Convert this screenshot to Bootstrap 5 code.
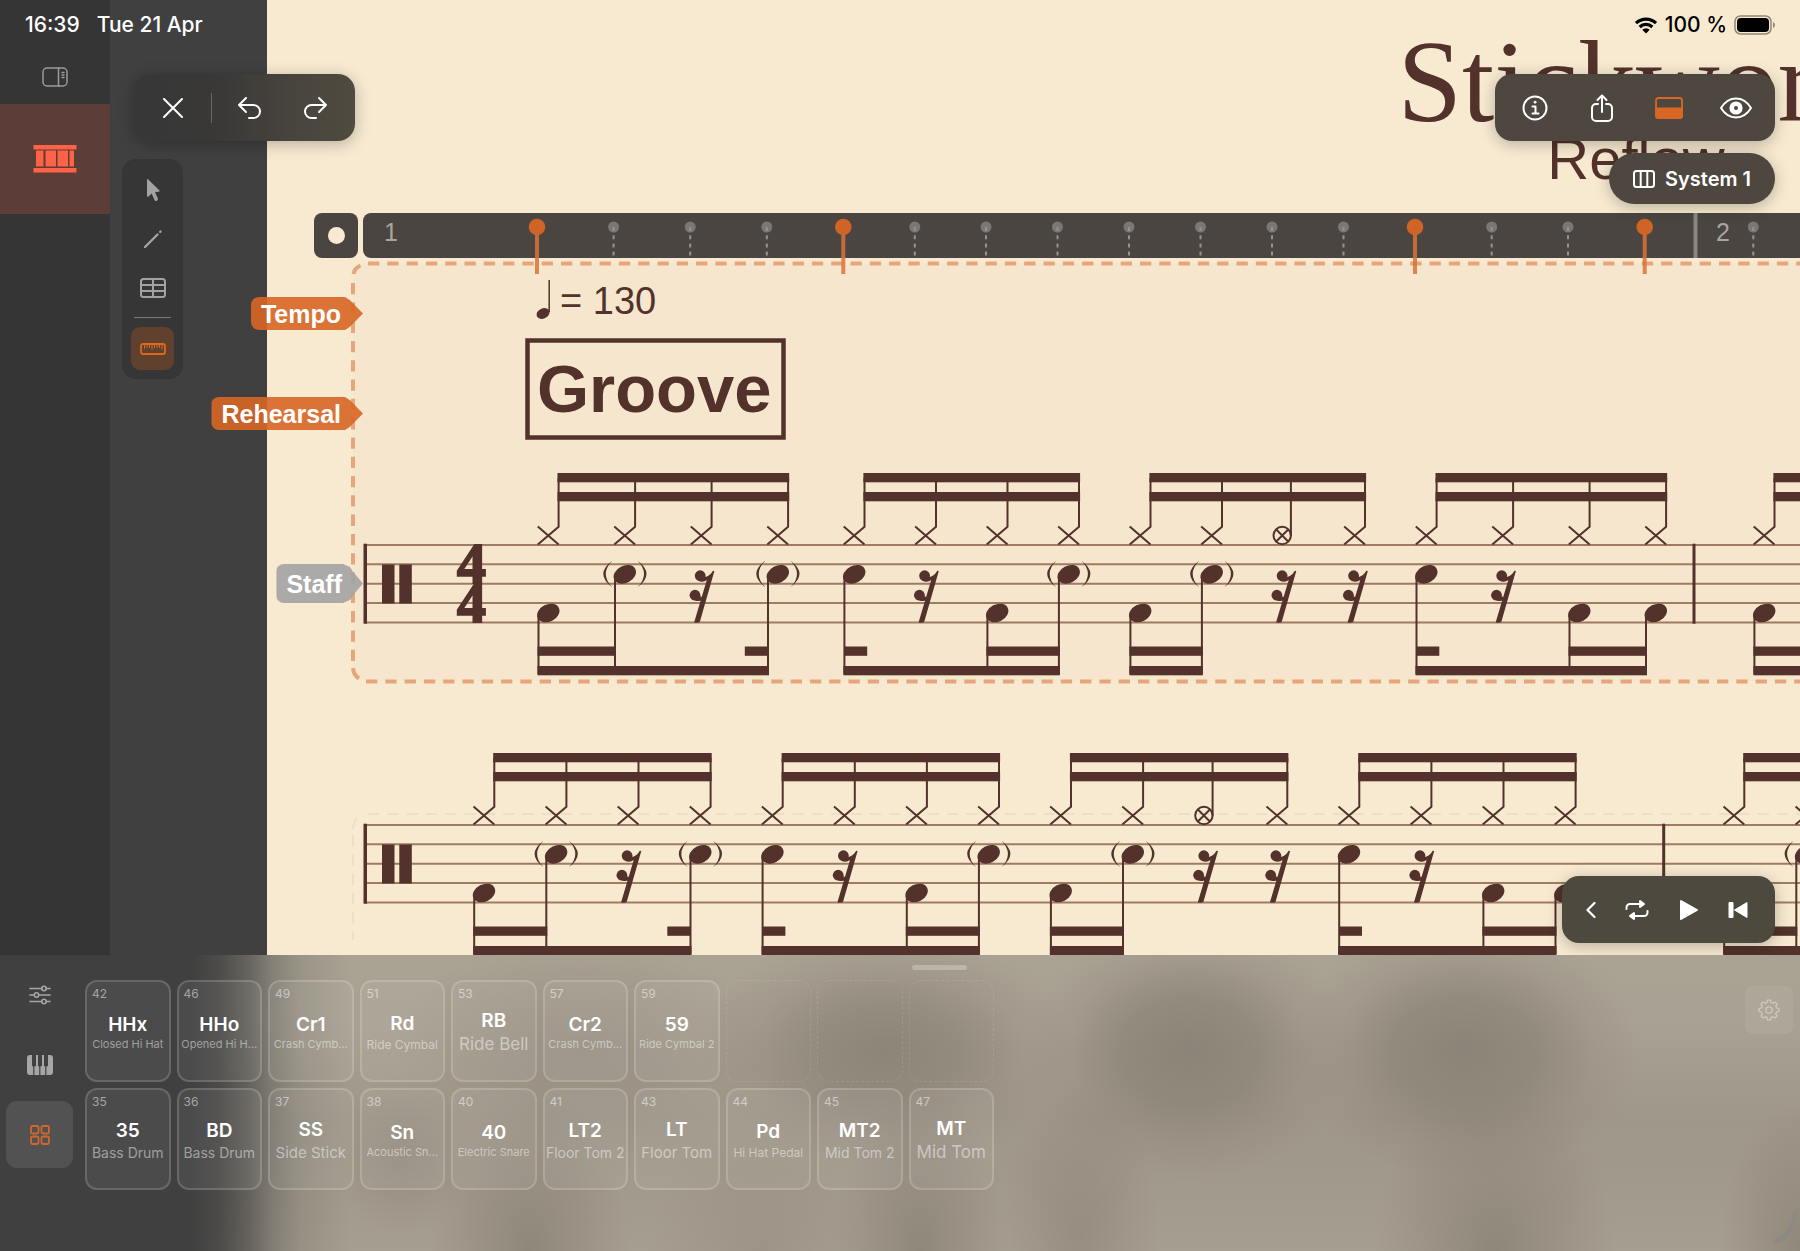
<!DOCTYPE html>
<html lang="en">
<head>
<meta charset="utf-8">
<meta name="viewport" content="width=device-width, initial-scale=1">
<title>Stickwork – Reflow</title>
<link href="https://cdn.jsdelivr.net/npm/bootstrap@5.3.0/dist/css/bootstrap.min.css" rel="stylesheet">
<style>
:root { --ink:#52322b; --paper:#f8ead1; --accent:#d86625; --chip:#4d473f; }
body { font-family:Inter,"Liberation Sans",sans-serif; background:#404040; }
button { background:none; border:0; padding:0; color:inherit; line-height:1; }
svg { display:block; }
svg text { font-family:"Liberation Sans",sans-serif; }
.ico { fill:none; stroke:currentColor; stroke-width:2; stroke-linecap:round; stroke-linejoin:round; }

.clock-bar { height:50px; padding:0 24px 0 25px; font-size:21px; font-weight:500; z-index:6; pointer-events:none; }
.track-rail { width:110px; background:#353535; padding-top:44px; flex:none; }
.track-rail .rail-toggle { height:60px; padding-top:6px; color:#9b9b9b; }
.track-rail .track { height:110px; background:#5c3d37; color:#ff6347; }
.gutter { width:157px; flex:none; background:#404040; }

.sheet { background:var(--paper); min-width:0; }
.sheet-canvas { width:2738px; color:var(--ink); }
.sheet-head { height:213px; padding-top:15px; }
.sheet-title { font:400 116px/134px "Liberation Serif",serif; margin:0; }
.sheet-sub { font:400 58px/64px "Liberation Sans",sans-serif; margin:-22px 0 0; }
.ruler-row { padding-left:47px; gap:5px; z-index:1; }
.loop-key { width:44px; height:45px; border-radius:8px; background:#4a4540; }
.loop-key span { display:block; width:17px; height:17px; border-radius:50%; background:var(--paper); }
.ruler-row svg, .system { overflow:visible; }
.staffline { stroke:#9f7b61; stroke-width:2; }
.glyph { fill:var(--ink); }
.stroke { stroke:var(--ink); fill:none; stroke-width:2; }
.meter { font-family:"Liberation Serif",serif; font-size:58px; font-weight:700; fill:var(--ink); stroke:var(--ink); stroke-width:2; }

.lane-tags { top:297px; left:0; width:363px; z-index:3; font:700 25px/33px "Liberation Sans",sans-serif; color:#fff; }
.lane { background:rgba(216,102,37,.9); padding:0 22px 0 10px; height:33px; border-radius:8px 0 0 8px; line-height:34px;
  clip-path:polygon(0 0,calc(100% - 18px) 0,calc(100% - 13px) 10%,100% 50%,calc(100% - 13px) 90%,calc(100% - 18px) 100%,0 100%); }
.lane-rehearsal { margin-top:67px; }
.lane-staff { margin-top:134px; height:39px; line-height:41px; background:rgba(163,163,163,.9); padding-right:21px;
  clip-path:polygon(0 0,calc(100% - 20px) 0,calc(100% - 13px) 8%,calc(100% - 10px) 20%,100% 50%,calc(100% - 10px) 80%,calc(100% - 13px) 92%,calc(100% - 20px) 100%,0 100%); }

.float-bar { background:var(--chip); border-radius:17px; height:67px; color:#fff; box-shadow:0 3px 16px rgba(0,0,0,.26); z-index:5; }
.edit-bar { left:134px; top:74px; width:221px; background:linear-gradient(90deg,#373737 0%,#393837 35%,#48443e 72%,#504a3f 100%); }
.edit-bar button { width:67px; height:67px; }
.bar-sep { width:1px; height:30px; background:#6a6866; }
.view-bar { right:25px; top:74px; width:280px; padding:0 6px; }
.view-bar button { width:67px; height:67px; }
.system-pill { right:25px; top:153px; width:166px; height:51px; border-radius:26px; font-size:20px; font-weight:600; gap:10px; }
.transport { right:25px; bottom:12px; width:213px; padding:0 27px 0 24px; background:#4d493f; }
.tool-strip { left:122px; top:159px; width:61px; height:220px; padding-top:9px; border-radius:14px; background:#363636; color:#a3a3a3; z-index:4; }
.tool-strip button { width:43px; height:43px; margin-bottom:6px; border-radius:9px; }
.tool-strip hr { width:37px; margin:2px 0 9px; border-color:#8a8a8a; opacity:.8; }
.tool-strip .on { background:#5f412e; color:#e0671f; }

.pad-panel { height:296px; padding:24px 7px 0 6px; flex:none; color:#fff;
  background:
   radial-gradient(ellipse 190px 120px at 885px 95px,rgba(137,128,117,.85),rgba(137,128,117,.6) 40%,rgba(137,128,117,.2) 72%,transparent),
   radial-gradient(ellipse 165px 130px at 1190px 95px,rgba(137,128,117,.9),rgba(137,128,117,.65) 42%,rgba(137,128,117,.2) 74%,transparent),
   radial-gradient(ellipse 175px 130px at 1465px 95px,rgba(137,128,117,.9),rgba(137,128,117,.65) 42%,rgba(137,128,117,.2) 74%,transparent),
   radial-gradient(ellipse 190px 110px at 580px 95px,rgba(143,134,123,.55),rgba(143,134,123,.35) 45%,transparent),
   radial-gradient(ellipse 70px 80px at 402px 200px,rgba(140,131,120,.5),rgba(140,131,120,.3) 45%,transparent),
   radial-gradient(ellipse 100px 170px at 530px 300px,rgba(136,127,116,.75),rgba(136,127,116,.4) 45%,transparent),
   radial-gradient(ellipse 110px 140px at 760px 300px,rgba(143,134,123,.4),rgba(143,134,123,.2) 50%,transparent),
   radial-gradient(ellipse 90px 170px at 920px 300px,rgba(136,127,116,.75),rgba(136,127,116,.4) 45%,transparent),
   radial-gradient(ellipse 80px 150px at 1080px 280px,rgba(136,127,116,.5),rgba(136,127,116,.25) 50%,transparent),
   radial-gradient(ellipse 120px 180px at 1495px 300px,rgba(136,127,116,.75),rgba(136,127,116,.4) 45%,transparent),
   radial-gradient(ellipse 80px 140px at 1800px 290px,rgba(136,127,116,.7),transparent),
   linear-gradient(180deg,#aaa394 0,#a8a092 25%,#9f9789 55%,#a0988a 70%,#a69e90 100%);
  }
.pad-panel::before { content:""; position:absolute; inset:0; background:linear-gradient(90deg,#404040 190px,rgba(64,64,64,.88) 220px,rgba(64,64,64,.62) 250px,rgba(64,64,64,.35) 272px,rgba(64,64,64,.15) 300px,rgba(64,64,64,0) 350px); }
.mode-list { width:67px; color:#a6a6a6; margin-top:-18px; }
.mode-list button { width:67px; height:67px; border-radius:11px; margin-bottom:3px; }
.mode-list .on { background:#525252; color:#d0682c; }
.pads { display:grid; grid-template-columns:repeat(10,1fr); gap:6px; width:909px; margin-left:12px; padding-top:1px; }
.pad { height:102px; border-radius:12px; border:2px solid rgba(255,255,255,.16); background:rgba(255,255,255,.06); color:#fff; position:relative; min-width:0; white-space:nowrap; }
.pad-empty { border:1px dashed rgba(255,255,255,.1); height:102px; border-radius:12px; }
.pad-no { position:absolute; left:5px; top:5px; font-size:12px; line-height:14px; color:rgba(255,255,255,.5); }
.pad-name { font-size:19px; line-height:23px; font-weight:600; }
.pad-label { color:rgba(255,255,255,.48); line-height:17px; font-size:14px; margin:2px 0 -2px; }
.s11 { font-size:11px; line-height:13px; } .s12 { font-size:12px; line-height:15px; }
.s15 { font-size:15px; line-height:19px; } .s17 { font-size:17px; line-height:21px; }
.grabber { top:10px; left:50%; margin-left:12px; width:55px; height:5px; border-radius:3px; background:rgba(255,255,255,.25); }
.gear { width:48px; height:48px; margin-top:7px; border-radius:8px; background:rgba(255,255,255,.07); color:#d0c9bd; }
.corner-hint { right:3px; bottom:6px; }
</style>
<script src="https://cdn.jsdelivr.net/npm/bootstrap@5.3.0/dist/js/bootstrap.bundle.min.js"></script>
</head>
<body class="vh-100 d-flex flex-column overflow-hidden position-relative">

<header class="clock-bar position-absolute top-0 start-0 w-100 d-flex align-items-center justify-content-between">
  <div class="text-white d-flex" style="gap:17px"><span>16:39</span><span>Tue 21 Apr</span></div>
  <div class="d-flex align-items-center text-black" style="gap:7px">
    <svg width="24" height="18" viewBox="0 0 24 18"><g fill="none" stroke="#000" stroke-width="3.2"><path d="M2 7.2a14.2 14.2 0 0 1 20 0"/><path d="M5.700 11a9 9 0 0 1 12.600 0"/></g><path d="M12 17.400 8.300 13.700a5.200 5.200 0 0 1 7.400 0z"/></svg>
    <span>100 %</span>
    <svg width="42" height="20" viewBox="0 0 42 20"><rect x="1" y="1" width="36" height="18" rx="5.500" fill="none" stroke="#8e8777" stroke-width="1.500"/><rect x="3" y="3" width="32" height="14" rx="4"/><path d="M39 7v6q2-.8 2-3t-2-3z" fill="#8e8777"/></svg>
  </div>
</header>

<main class="flex-grow-1 d-flex position-relative overflow-hidden" style="min-height:0">
  <nav class="track-rail" aria-label="Tracks">
    <button class="rail-toggle w-100 d-flex justify-content-center align-items-center pb-1" aria-label="Toggle inspector">
      <svg class="ico mt-1" width="26" height="20" viewBox="0 0 26 20" style="stroke-width:1.5"><rect x="1" y="1" width="24" height="18" rx="4"/><path d="M16.500 1v18M20 5.500h2M20 8h2M20 10.500h2"/></svg>
    </button>
    <button class="track w-100 d-flex justify-content-center align-items-center" aria-label="Drum track">
      <svg width="44" height="28" viewBox="0 0 44 28" fill="currentColor"><rect x=".5" width="43" height="4.500"/><rect x=".5" y="23" width="43" height="4.500"/><path d="M3 5.500h7.500v16H3zM12.500 5.500h10.500v16H12.500zM24.500 5.500H35v16H24.500zM36.500 5.500H41v16h-4.500z"/></svg>
    </button>
  </nav>
  <div class="gutter"></div>

  <section class="sheet flex-grow-1 overflow-hidden" aria-label="Score">
    <div class="sheet-canvas">
      <div class="sheet-head text-center">
        <h1 class="sheet-title">Stickwork</h1>
        <p class="sheet-sub">Reflow</p>
      </div>
      <div class="ruler-row d-flex position-relative">
        <button class="loop-key d-flex align-items-center justify-content-center" aria-label="Record lane"><span></span></button>
        <svg id="ruler" width="2642" height="45" viewBox="363 213 2642 45"></svg>
      </div>
      <svg class="system" id="system1" width="2738" height="440" viewBox="267 258 2738 440">
        <path d="M368 263H3005V681H368Q353 681 353 666V278Q353 263 368 263Z" fill="#f5e6cd"/>
        <g fill="none" stroke="#e6a57a" stroke-width="4">
          <path d="M368 263.500H3005M366 681.500H3005" stroke-dasharray="11.300 8"/>
          <path d="M353 283V662" stroke-dasharray="11.300 8"/>
          <path d="M353.500 274Q354.500 268 360.500 265.500M353 668Q353.500 675 359 678.500"/>
        </g>
        <ellipse class="glyph" cx="543" cy="313.500" rx="6.800" ry="5" transform="rotate(-25 543 313.500)"/>
        <path class="stroke" d="M549.200 280V312" style="stroke-width:1.5"/>
        <text class="glyph" x="560" y="314" font-size="38">= 130</text>
        <rect x="527.500" y="340.500" width="256" height="97" fill="none" stroke="#52322b" stroke-width="4.500"/>
        <text class="glyph" x="537" y="412" font-size="67" font-weight="700">Groove</text>
      </svg>
      <svg class="system" id="system2" width="2738" height="300" viewBox="267 698 2738 300">
        <path d="M368 814H3005M353 835V940M353 829Q354 818 361 815" fill="none" stroke="#ecdfc5" stroke-width="2" stroke-dasharray="11.300 8"/>
      </svg>
    </div>
  </section>

  <div class="lane-tags position-absolute d-flex flex-column align-items-end">
    <div class="lane">Tempo</div>
    <div class="lane lane-rehearsal">Rehearsal</div>
    <div class="lane lane-staff">Staff</div>
  </div>

  <div class="float-bar edit-bar position-absolute d-flex align-items-center justify-content-center" role="toolbar">
    <button class="d-flex align-items-center justify-content-center" aria-label="Close"><svg class="ico" width="20" height="20" viewBox="0 0 20 20"><path d="M1 1l18 18M19 1L1 19"/></svg></button>
    <div class="bar-sep mx-1"></div>
    <button class="d-flex align-items-center justify-content-center" aria-label="Undo"><svg class="ico" width="24" height="24" viewBox="0 0 24 24"><path d="M9 2L2 9l7 7M2 9h14.500a6.500 6.500 0 0 1 0 13H12"/></svg></button>
    <button class="d-flex align-items-center justify-content-center" aria-label="Redo"><svg class="ico" width="24" height="24" viewBox="0 0 24 24"><path d="M15 2l7 7-7 7M22 9H7.500a6.500 6.500 0 0 0 0 13H12"/></svg></button>
  </div>

  <div class="tool-strip position-absolute d-flex flex-column align-items-center" role="toolbar" aria-label="Tools">
    <button class="d-flex align-items-center justify-content-center" aria-label="Select"><svg width="16" height="24" viewBox="0 0 16 24" fill="currentColor"><path d="M2 1.500Q2 .5 3 1.200L14.500 12.500Q15 13.700 13.600 13.700L10 14l2.800 6.500q.5 1.600-1 2.300t-2.300-.8L6.700 15.500 3.500 18.600Q2 19.400 2 18z"/></svg></button>
    <button class="d-flex align-items-center justify-content-center" aria-label="Draw"><svg width="20" height="20" viewBox="0 0 20 20" fill="none" stroke="currentColor" stroke-width="2.400" stroke-linecap="round"><path d="M2 18L14.500 5.500M17.200 2.800l.3-.3"/></svg></button>
    <button class="d-flex align-items-center justify-content-center" aria-label="Table"><svg class="ico" width="26" height="20" viewBox="0 0 26 20"><rect x="1" y="1" width="24" height="18" rx="2.500"/><path d="M1 7h24M1 13h24M13 1v18"/></svg></button>
    <hr>
    <button class="on d-flex align-items-center justify-content-center" aria-label="Ruler"><svg class="ico" width="26" height="12" viewBox="0 0 26 12" style="stroke-width:1.8"><rect x="1" y="1" width="24" height="10" rx="2"/><path d="M4.500 2v3.500M7 2v2.500M9.500 2v2.500M12 2v4M14.500 2v2.500M17 2v2.500M19.500 2v2.500M22 2v4" stroke-width="1"/></svg></button>
  </div>

  <div class="float-bar view-bar position-absolute d-flex align-items-center" role="toolbar">
    <button class="d-flex align-items-center justify-content-center" aria-label="Info"><svg class="ico" width="26" height="26" viewBox="0 0 26 26"><circle cx="13" cy="13" r="11.500"/><path d="M10.500 11.500H13.500V18.500M10.500 18.500h6"/><circle cx="13" cy="7.200" r="1" fill="currentColor" stroke-width="1"/></svg></button>
    <button class="d-flex align-items-center justify-content-center" aria-label="Share"><svg class="ico" width="24" height="28" viewBox="0 0 24 28"><path d="M8 10H6a4 4 0 0 0-4 4v9a4 4 0 0 0 4 4h12a4 4 0 0 0 4-4v-9a4 4 0 0 0-4-4h-2M12 18V2M7.500 6L12 1.500 16.500 6"/></svg></button>
    <button class="d-flex align-items-center justify-content-center" aria-label="Bottom panel" style="color:#d86625"><svg width="28" height="22" viewBox="0 0 28 22" fill="none" stroke="currentColor" stroke-width="1.800"><rect x="1" y="1" width="26" height="20" rx="2.500"/><path d="M1 11.500h26V19a2 2 0 0 1-2 2H3a2 2 0 0 1-2-2z" fill="currentColor"/></svg></button>
    <button class="d-flex align-items-center justify-content-center" aria-label="Visibility"><svg class="ico" width="32" height="22" viewBox="0 0 32 22"><path d="M1 11C5 4.500 10 1.500 16 1.500S27 4.500 31 11C27 17.500 22 20.500 16 20.500S5 17.500 1 11z"/><circle cx="16" cy="11" r="4.300" stroke-width="4.600"/></svg></button>
  </div>
  <button class="float-bar system-pill position-absolute d-flex align-items-center justify-content-center"><svg class="ico" width="22" height="18" viewBox="0 0 22 18"><rect x="1" y="1" width="20" height="16" rx="2.500"/><path d="M7.700 1v16M14.300 1v16"/></svg>System 1</button>

  <div class="float-bar transport position-absolute d-flex align-items-center justify-content-between" role="toolbar" aria-label="Transport">
    <button aria-label="Collapse"><svg class="ico" width="10" height="18" viewBox="2 0 10 18" style="stroke-width:2.200"><path d="M10.500 2L3.500 9l7 7"/></svg></button>
    <button aria-label="Loop"><svg class="ico" width="24" height="20" viewBox="0 0 24 20"><path d="M1.500 9V7.500a3.500 3.500 0 0 1 3.500-3.500H15M22.500 11v1.500a3.500 3.500 0 0 1-3.500 3.500H9"/><path d="M15 1v6l4-3zM9 13v6l-4-3z" fill="currentColor"/></svg></button>
    <button aria-label="Play"><svg width="20" height="22" viewBox="0 0 20 22" fill="currentColor" stroke="currentColor" stroke-width="2" stroke-linejoin="round"><path d="M2 2l16 9-16 9z"/></svg></button>
    <button aria-label="Rewind"><svg width="20" height="18" viewBox="0 0 20 18" fill="currentColor" stroke="currentColor" stroke-linejoin="round"><path d="M1 1.500h4v15H1zM19 1.500v15L6.500 9z"/></svg></button>
  </div>
</main>

<section class="pad-panel position-relative d-flex" aria-label="Drum pads">
  <div class="mode-list d-flex flex-column position-relative">
    <button class="d-flex align-items-center justify-content-center" aria-label="Mixer"><svg class="ico" width="22" height="20" viewBox="0 0 22 20" style="stroke-width:1.600"><path d="M1 3.500h11.500M17.500 3.500H21M1 10h4M10 10h11M1 16.500h11.500M17.500 16.500H21"/><circle cx="15" cy="3.500" r="2.200"/><circle cx="7.500" cy="10" r="2.200"/><circle cx="15" cy="16.500" r="2.200"/></svg></button>
    <button class="d-flex align-items-center justify-content-center" aria-label="Keyboard"><svg width="26" height="20" viewBox="0 0 26 20" fill="currentColor"><path d="M3 0h2v10.500q0 1 1.200 1V20H3q-3 0-3-3V3q0-3 3-3zM9 0h2v10.500q0 1 1.200 1V20H7.400v-8.500Q9 11.500 9 10.500zM15 0h2v10.500q0 1 1.200 1V20H13.400v-8.500Q15 11.500 15 10.500zM21 0h2q3 0 3 3v14q0 3-3 3h-3.600v-8.500Q21 11.500 21 10.500z"/></svg></button>
    <button class="on d-flex align-items-center justify-content-center" aria-label="Pads"><svg class="ico" width="20" height="20" viewBox="0 0 20 20" style="stroke-width:1.800"><rect x="1" y="1" width="7.500" height="7.500" rx="1.500"/><rect x="11.500" y="1" width="7.500" height="7.500" rx="1.500"/><rect x="1" y="11.500" width="7.500" height="7.500" rx="1.500"/><rect x="11.500" y="11.500" width="7.500" height="7.500" rx="1.500"/></svg></button>
  </div>
  <div class="pads align-content-start position-relative" id="pads"></div>
  <button class="gear ms-auto d-flex align-items-center justify-content-center position-relative" aria-label="Pad settings"><svg class="ico" width="22" height="22" viewBox="0 0 22 22" style="stroke-width:1.300"><circle cx="11" cy="11" r="3.200"/><path id="cog"/></svg></button>
  <div class="grabber position-absolute"></div>
  <svg class="corner-hint position-absolute" width="26" height="34" viewBox="0 0 26 34" fill="none" stroke="#8c8a84" stroke-width="4"><path d="M2 31Q21 27 24 2"/></svg>
</section>

<script>
const INK = '#52322b';
const rect = (x, y, w, h) => `<rect x="${x}" y="${y}" width="${w}" height="${h}" fill="${INK}"/>`;

/* one system: beat groups of sixteenths; dy shifts it down from the first staff */
function system(dy, measures, clef) {
  let s = '';
  const top = 545 + dy;
  for (let i = 0; i < 5; i++) s += `<path class="staffline" d="M365 ${top + i * 19.35}H2950"/>`;
  s += rect(363.5, top - 1.3, 3.5, 80) + rect(382, top + 19.5, 12.5, 39) + rect(399.3, top + 19.5, 12.5, 39);
  if (clef) s += `<text class="meter" x="457" y="583">4</text><text class="meter" x="457" y="622">4</text>`;
  const head = (x, y) => `<ellipse class="glyph" cx="${x + 11}" cy="${y}" rx="11.8" ry="8.6" transform="rotate(-27 ${x + 11} ${y})"/>`;
  const rest = x => `<g class="glyph" transform="translate(${x} ${570.5 + dy})"><circle cx="10.400" cy="5.200" r="5.400"/><circle cx="5.200" cy="24.700" r="5.400"/><path d="M24.600 .6 10 51.500Q7 53 4.400 51.800L17 9.500Q13.500 12.500 8 10.300L13 6.500Q19 7 23.200 .2zM5 30L9 25.500Q13.500 28 18 22L16.500 27.500Q12 32 5 30z"/></g>`;
  const ghost = x => `<path class="glyph" d="M${x - 1.5} ${560.7 + dy}q-18 13 0 26.600q-13-13.500 0-26.600zM${x + 23.7} ${560.7 + dy}q18 13 0 26.600q13-13.500 0-26.600z"/>`;
  const patterns = ['bgrg', 'srbg', 'bgrr', 'srbb'];
  for (const m of measures) {
    m.beats.forEach((p, gi) => {
      const st = m.step[gi], x = i => p + st * i;
      s += rect(x(0) + 20.2, 473 + dy, 3 * st + 2.2, 9.3) + rect(x(0) + 20.2, 492 + dy, 3 * st + 2.2, 9.3);
      for (let i = 0; i < 4; i++) {
        const px = x(i), y = 535.5 + dy;
        if (gi === 2 && i === 2) {
          s += `<path class="stroke" d="M${px + 18.7} ${478 + dy}V${y}"/><circle class="stroke" cx="${px + 10}" cy="${y}" r="8.700"/><path class="stroke" d="M${px + 4} ${y - 6}l12 12M${px + 16} ${y - 6}l-12 12"/>`;
        } else {
          s += `<path class="stroke" d="M${px + 21.3} ${478 + dy}V${y - 8.7}L${px + .5} ${y + 9}M${px + .5} ${y - 9}L${px + 21.3} ${y + 9}"/>`;
        }
        const k = patterns[gi][i];
        if (k === 'r') { s += rest(px - .5); continue; }
        const hy = (k === 'b' ? 613 : 574.3) + dy;
        s += head(px, hy) + `<path class="stroke" d="M${px + 1.2} ${hy + 3}V${674 + dy}"/>`;
        if (k === 'g') s += ghost(px);
      }
      const beam = (a, b, y) => rect(x(a) + .2, y + dy, (b - a) * st + 2, 9.3);
      s += beam(0, gi === 2 ? 1 : 3, 666);
      if (gi === 0) s += beam(0, 1, 646.5) + rect(x(3) - 22, 646.5 + dy, 23, 9.3);
      if (gi === 2) s += beam(0, 1, 646.5);
      if (gi === 1 || gi === 3) s += beam(2, 3, 646.5) + rect(x(0) + 1, 646.5 + dy, 23, 9.3);
    });
    if (m.bar) s += rect(m.bar - 1.5, top - 1.3, 3, 80);
  }
  return s;
}
document.getElementById('system1').insertAdjacentHTML('beforeend', system(0, [
  { beats: [537.3, 843.2, 1129.2, 1415.3], step: [76.5, 71.5, 71.5, 76.5], bar: 1694 },
  { beats: [1753.2, 2059, 2345, 2631], step: [76.5, 71.5, 71.5, 76.5] }], true));
document.getElementById('system2').insertAdjacentHTML('beforeend', system(280, [
  { beats: [473, 761.4, 1049.7, 1338], step: [72.1, 72.1, 72.1, 72.1], bar: 1663.7 },
  { beats: [1723, 2011, 2299, 2587], step: [72.1, 72.1, 72.1, 72.1] }], false));

/* time ruler: beat pins reach below the bar, sixteenth pins stay inside */
const beats = [537, 843.3, 1415, 1644.7];
const ticks = [613.6, 690.2, 766.8, 914.8, 986, 1057.5, 1129, 1200.5, 1272, 1343.5, 1491.7, 1568, 1753.3, 1829.8, 1906];
document.getElementById('ruler').innerHTML =
  `<rect x="363" y="213" width="2642" height="45" rx="8" fill="#4a4540"/>` +
  `<g fill="#a8a49f" font-size="25"><text x="384" y="241">1</text><text x="1716" y="241">2</text></g><rect x="1693.500" y="213" width="4" height="45" fill="#8a8683"/>` +
  ticks.map(x => `<circle cx="${x}" cy="227" r="5.500" fill="#7b7774"/><path d="M${x} 227V256" stroke="#96928f" stroke-width="2" stroke-dasharray="4 4.200"/>`).join('') +
  beats.map(x => `<path d="M${x} 227V274" stroke="#d9733a" stroke-width="4" opacity=".85"/><circle cx="${x}" cy="227" r="8.300" fill="#d06427"/>`).join('');

/* drum pads: MIDI note, short name, label, label size class; null is an empty slot */
const pads = [
  [42,'HHx','Closed Hi Hat','s11'],[46,'HHo','Opened Hi H…','s11'],[49,'Cr1','Crash Cymb…','s11'],[51,'Rd','Ride Cymbal','s12'],[53,'RB','Ride Bell','s17'],[57,'Cr2','Crash Cymb…','s11'],[59,'59','Ride Cymbal 2','s11'],null,null,null,
  [35,'35','Bass Drum',''],[36,'BD','Bass Drum',''],[37,'SS','Side Stick','s15'],[38,'Sn','Acoustic Sn…','s11'],[40,'40','Electric Snare','s11'],[41,'LT2','Floor Tom 2',''],[43,'LT','Floor Tom','s15'],[44,'Pd','Hi Hat Pedal','s12'],[45,'MT2','Mid Tom 2',''],[47,'MT','Mid Tom','s17']];
document.getElementById('pads').innerHTML = pads.map(p => p
  ? `<button class="pad d-flex flex-column align-items-center justify-content-center"><span class="pad-no">${p[0]}</span><span class="pad-name">${p[1]}</span><span class="pad-label ${p[3]}">${p[2]}</span></button>`
  : '<div class="pad-empty"></div>').join('');

/* eight-tooth cog outline */
let d = '';
for (let i = 0; i < 8; i++) for (const [o, r] of [[-14, 7.8], [-9, 10], [9, 10], [14, 7.8]]) {
  const a = (i * 45 + o) * Math.PI / 180;
  d += (d ? 'L' : 'M') + (11 + r * Math.cos(a)).toFixed(1) + ' ' + (11 + r * Math.sin(a)).toFixed(1);
}
document.getElementById('cog').setAttribute('d', d + 'Z');
</script>
</body>
</html>
